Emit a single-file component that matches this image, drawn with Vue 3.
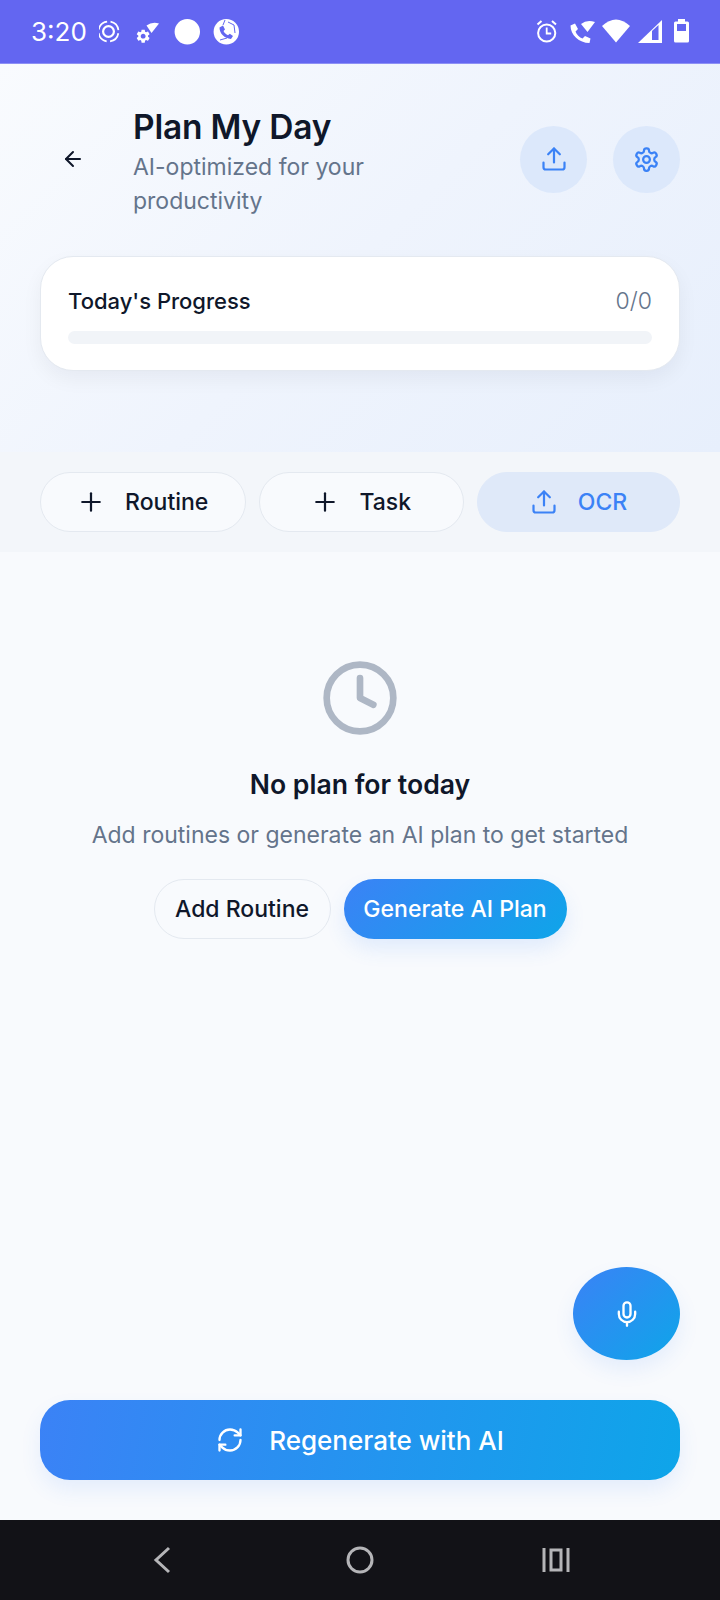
<script setup>
const chips = [
  { label: 'Routine', icon: 'plus', wide: true },
  { label: 'Task', icon: 'plus', wide: true },
  { label: 'OCR', icon: 'upload', accent: true },
]
</script>

<template>
  <div class="page">
    <div class="status">
      <div class="status-left">
        <span class="time">3:20</span>
        <svg class="s-left" width="140" height="30" viewBox="100 17 140 30" fill="none">
          <circle cx="109.5" cy="31.5" r="10" stroke="#fff" stroke-width="1.7" stroke-dasharray="12.2 3.5" stroke-dashoffset="-1.8" />
          <circle cx="109.5" cy="31.5" r="5.4" stroke="#fff" stroke-width="2.2" />
          <path d="M147.5 25.5 Q153 21.5 160 23.5 L152.5 33 Z" fill="#fff" />
          <path transform="translate(136 28) scale(0.68)" fill="#fff" d="M19.14 12.94c.04-.3.06-.61.06-.94 0-.32-.02-.64-.07-.94l2.03-1.58c.18-.14.23-.41.12-.61l-1.92-3.32c-.12-.22-.37-.29-.59-.22l-2.39.96c-.5-.38-1.03-.7-1.62-.94l-.36-2.54c-.04-.24-.24-.41-.48-.41h-3.84c-.24 0-.43.17-.47.41l-.36 2.54c-.59.24-1.13.57-1.62.94l-2.39-.96c-.22-.08-.47 0-.59.22L2.74 8.87c-.12.21-.08.47.12.61l2.03 1.58c-.05.3-.09.63-.09.94s.02.64.07.94l-2.03 1.58c-.18.14-.23.41-.12.61l1.92 3.32c.12.22.37.29.59.22l2.39-.96c.5.38 1.03.7 1.62.94l.36 2.54c.05.24.24.41.48.41h3.84c.24 0 .44-.17.47-.41l.36-2.54c.59-.24 1.13-.56 1.62-.94l2.39.96c.22.08.47 0 .59-.22l1.92-3.32c.12-.22.07-.47-.12-.61l-2.01-1.58zM12 15.6c-1.98 0-3.6-1.62-3.6-3.6s1.62-3.6 3.6-3.6 3.6 1.62 3.6 3.6-1.62 3.6-3.6 3.6z" />
          <circle cx="188.3" cy="31.7" r="12.7" fill="#fff" />
          <circle cx="227.3" cy="31.7" r="12.7" fill="#fff" />
          <path d="M220.5 27.5 L224 25.5 L226 29.5 L224.5 31 C225.5 33 227 34.5 229 35.2 L230.8 33.8 L234 36 L232 39 C225.5 38.5 220.5 33.5 220.5 27.5 Z" fill="#6366f1" />
          <path d="M226 20 L224 25 M229 22 L235 25 L236 33 M221 40 L228 38" stroke="#6366f1" stroke-width="1" />
        </svg>
      </div>
      <svg class="s-right" width="180" height="30" viewBox="520 17 180 30" fill="none">
        <circle cx="546.7" cy="33" r="8.6" stroke="#fff" stroke-width="2" />
        <path d="M546.7 27.5v6h4.5" stroke="#fff" stroke-width="1.8" />
        <path d="M537.5 24.5l4-3.5M556 24.5l-4-3.5" stroke="#fff" stroke-width="2" />
        <path d="M570.5 25.5 L575 23.5 L578 29 L575.5 31.5 C576.5 34.5 579.5 37.5 582.5 38.5 L585 36 L590.5 38.5 L589.5 43 C579 43 570.5 35 570.5 25.5 Z" fill="#fff" />
        <path d="M581 24 Q587 19 595 22 L587.5 32 Z" fill="#fff" />
        <path d="M602 26 Q616 13 630 26 L616 42.5 Z" fill="#fff" />
        <path d="M662 20 V43 H638 Z" fill="#fff" />
        <path d="M652 31 L658.5 25 V40 H652 Z" fill="#6366f1" />
        <path d="M678 19h7v2.5h2.5a1.5 1.5 0 0 1 1.5 1.5v18a1.5 1.5 0 0 1-1.5 1.5h-12a1.5 1.5 0 0 1-1.5-1.5v-18a1.5 1.5 0 0 1 1.5-1.5h2.5z" fill="#fff" />
        <rect x="677" y="24" width="9" height="7" fill="#6366f1" />
      </svg>
    </div>

    <header class="hero">
      <div class="hero-row">
        <button class="back">
          <svg width="24" height="24" viewBox="0 0 24 24" fill="none" stroke="#0f172a" stroke-width="2" stroke-linecap="round" stroke-linejoin="round">
            <path d="M12 19l-7-7 7-7" /><path d="M19 12H5" />
          </svg>
        </button>
        <div class="hero-text">
          <h1>Plan My Day</h1>
          <p>AI-optimized for your productivity</p>
        </div>
        <button class="round">
          <svg width="28" height="28" viewBox="0 0 24 24" fill="none" stroke="#3b82f6" stroke-width="1.9" stroke-linecap="round" stroke-linejoin="round">
            <path d="M21 15v4a2 2 0 0 1-2 2H5a2 2 0 0 1-2-2v-4" /><polyline points="17 8 12 3 7 8" /><line x1="12" y1="3" x2="12" y2="15" />
          </svg>
        </button>
        <button class="round">
          <svg width="27" height="27" viewBox="0 0 24 24" fill="none" stroke="#3b82f6" stroke-width="2" stroke-linecap="round" stroke-linejoin="round">
            <path d="M12.22 2h-.44a2 2 0 0 0-2 2v.18a2 2 0 0 1-1 1.73l-.43.25a2 2 0 0 1-2 0l-.15-.08a2 2 0 0 0-2.73.73l-.22.38a2 2 0 0 0 .73 2.73l.15.1a2 2 0 0 1 1 1.72v.51a2 2 0 0 1-1 1.74l-.15.09a2 2 0 0 0-.73 2.73l.22.38a2 2 0 0 0 2.73.73l.15-.08a2 2 0 0 1 2 0l.43.25a2 2 0 0 1 1 1.73V20a2 2 0 0 0 2 2h.44a2 2 0 0 0 2-2v-.18a2 2 0 0 1 1-1.73l.43-.25a2 2 0 0 1 2 0l.15.08a2 2 0 0 0 2.73-.73l.22-.39a2 2 0 0 0-.73-2.73l-.15-.08a2 2 0 0 1-1-1.74v-.5a2 2 0 0 1 1-1.74l.15-.09a2 2 0 0 0 .73-2.73l-.22-.38a2 2 0 0 0-2.73-.73l-.15.08a2 2 0 0 1-2 0l-.43-.25a2 2 0 0 1-1-1.73V4a2 2 0 0 0-2-2z" />
            <circle cx="12" cy="12" r="3" />
          </svg>
        </button>
      </div>
      <section class="progress-card">
        <div class="progress-top">
          <span class="progress-label">Today's Progress</span>
          <span class="progress-count">0/0</span>
        </div>
        <div class="track"></div>
      </section>
    </header>

    <div class="chips">
      <button v-for="chip in chips" :key="chip.label" class="chip" :class="{ accent: chip.accent, wide: chip.wide }">
        <svg v-if="chip.icon === 'plus'" width="28" height="28" viewBox="0 0 24 24" fill="none" stroke="#0f172a" stroke-width="1.9" stroke-linecap="round">
          <path d="M4.5 12h15" /><path d="M12 4.5v15" />
        </svg>
        <svg v-else width="28" height="28" viewBox="0 0 24 24" fill="none" stroke="#3b82f6" stroke-width="1.9" stroke-linecap="round" stroke-linejoin="round">
          <path d="M21 15v4a2 2 0 0 1-2 2H5a2 2 0 0 1-2-2v-4" /><polyline points="17 8 12 3 7 8" /><line x1="12" y1="3" x2="12" y2="15" />
        </svg>
        <span>{{ chip.label }}</span>
      </button>
    </div>

    <main class="content">
      <div class="empty">
        <svg width="80" height="80" viewBox="0 0 24 24" fill="none" stroke="#aeb7c5" stroke-width="2" stroke-linecap="round" stroke-linejoin="round">
          <circle cx="12" cy="12" r="10" /><polyline points="12 6 12 12 16 14" />
        </svg>
        <h2>No plan for today</h2>
        <p>Add routines or generate an AI plan to get started</p>
        <div class="empty-actions">
          <button class="outline">Add Routine</button>
          <button class="primary">Generate AI Plan</button>
        </div>
      </div>

      <button class="fab">
        <svg width="28" height="28" viewBox="0 0 24 24" fill="none" stroke="#fff" stroke-width="2" stroke-linecap="round" stroke-linejoin="round">
          <path d="M12 2a3 3 0 0 0-3 3v7a3 3 0 0 0 6 0V5a3 3 0 0 0-3-3Z" /><path d="M19 10v2a7 7 0 0 1-14 0v-2" /><line x1="12" y1="19" x2="12" y2="22" />
        </svg>
      </button>

      <button class="regen">
        <svg width="28" height="28" viewBox="0 0 24 24" fill="none" stroke="#fff" stroke-width="2" stroke-linecap="round" stroke-linejoin="round">
          <path d="M3 12a9 9 0 0 1 9-9 9.75 9.75 0 0 1 6.74 2.74L21 8" /><path d="M21 3v5h-5" /><path d="M21 12a9 9 0 0 1-9 9 9.75 9.75 0 0 1-6.74-2.74L3 16" /><path d="M8 16H3v5" />
        </svg>
        <span>Regenerate with AI</span>
      </button>
    </main>

    <nav class="nav">
      <svg width="20" height="28" viewBox="0 0 20 28" fill="none" stroke="#b5b5b8" stroke-width="3">
        <path d="M17 2 L4 14 L17 26" />
      </svg>
      <svg class="home" width="28" height="28" viewBox="0 0 28 28" fill="none" stroke="#b5b5b8" stroke-width="3">
        <circle cx="14" cy="14" r="12" />
      </svg>
      <svg width="28" height="26" viewBox="0 0 28 26" fill="none" stroke="#b5b5b8" stroke-width="3">
        <path d="M2 1v24M26 1v24" /><rect x="9" y="3" width="10" height="20" />
      </svg>
    </nav>
  </div>
</template>

<style>
html, body { margin: 0; background: #f8fafd; }
</style>

<style scoped>
.page {
  width: 720px;
  height: 1600px;
  display: flex;
  flex-direction: column;
  background: #f8fafd;
  font-family: "Inter", "Noto Sans", sans-serif;
  color: #0f172a;
  overflow: hidden;
}
button { font-family: inherit; border: none; padding: 0; cursor: pointer; }

.status {
  height: 64px;
  flex: none;
  box-sizing: border-box;
  padding: 0 20px 0 32px;
  background: #6366f1;
  border-bottom: 1px solid #8d90f5;
  display: flex;
  align-items: center;
  justify-content: space-between;
}
.status-left { display: flex; align-items: center; gap: 15px; }
.time { color: #fff; font-size: 26px; width: 53px; margin-left: -1px; font-weight: 400; }
.s-left, .s-right { display: block; }

.hero {
  height: 388px;
  flex: none;
  box-sizing: border-box;
  padding: 41px 40px 0;
  background: linear-gradient(135deg, #f9fbfe 0%, #eff4fd 50%, #e7effc 100%);
}
.hero-row { display: flex; align-items: center; height: 108px; }
.back {
  width: 66px; height: 66px; flex: none;
  background: transparent;
  display: flex; align-items: center; justify-content: center;
}
.hero-text { width: 248px; margin-left: 27px; margin-right: auto; align-self: flex-start; padding-top: 1px; }
h1 { margin: 0; font-size: 33.5px; line-height: 42px; font-weight: 600; letter-spacing: -0.2px; }
.hero-text p { margin: 2px 0 0; font-size: 23px; line-height: 34px; color: #64748b; }
.round {
  width: 67px; height: 67px; flex: none;
  margin-left: 26px;
  border-radius: 50%;
  background: #dce8fb;
  display: flex; align-items: center; justify-content: center;
}
.progress-card {
  margin-top: 43px;
  height: 115px;
  box-sizing: border-box;
  padding: 28px 27px 26px;
  background: #fff;
  border: 1px solid #e4e9f0;
  border-radius: 33px;
  box-shadow: 0 8px 20px rgba(15, 23, 42, 0.05);
}
.progress-top { display: flex; justify-content: space-between; align-items: center; height: 32px; }
.progress-label { font-size: 22px; font-weight: 500; }
.progress-count { font-size: 23px; color: #64748b; font-weight: 300; }
.track { margin-top: 14px; height: 13px; border-radius: 7px; background: #f1f4f8; }

.chips {
  height: 100px;
  flex: none;
  box-sizing: border-box;
  padding: 20px 40px;
  display: flex;
  gap: 13px;
  background: #f3f6fa;
}
.chip {
  flex: 0 0 203px;
  height: 60px;
  box-sizing: border-box;
  border: 1px solid #e4e9f0;
  border-radius: 30px;
  background: #f8fafd;
  display: flex; align-items: center; justify-content: center;
  gap: 20px;
  font-size: 23px;
  font-weight: 500;
  color: #0f172a;
}
.chip.wide { flex-basis: 205.5px; }
.chip.accent { background: #dfe9f9; border-color: #dfe9f9; color: #3b82f6; }

.content { flex: 1; position: relative; display: flex; flex-direction: column; align-items: center; padding: 106px 40px 40px; box-sizing: border-box; }
.empty { display: flex; flex-direction: column; align-items: center; }
h2 { margin: 28px 0 0; font-size: 26.6px; line-height: 36px; font-weight: 600; }
.empty p { margin: 17px 0 0; font-size: 23px; line-height: 32px; color: #64748b; white-space: nowrap; }
.empty-actions { display: flex; gap: 13px; margin-top: 28px; }
.outline {
  width: 177px; height: 60px;
  box-sizing: border-box;
  border: 1px solid #e4e9f0;
  border-radius: 30px;
  background: #f8fafd;
  color: #0f172a;
  font-size: 23px; font-weight: 500;
}
.primary {
  width: 223px; height: 60px;
  border-radius: 30px;
  background: linear-gradient(135deg, #3b82f6, #0ea5e9);
  color: #fff;
  font-size: 23px; font-weight: 500;
  box-shadow: 0 10px 20px rgba(59, 130, 246, 0.12);
}
.fab {
  position: absolute;
  right: 40px;
  bottom: 160px;
  width: 107px; height: 93px;
  border-radius: 50%;
  background: linear-gradient(135deg, #3b82f6, #0ea5e9);
  box-shadow: 0 10px 20px rgba(59, 130, 246, 0.1);
  display: flex; align-items: center; justify-content: center;
}
.regen {
  margin-top: auto;
  width: 640px; height: 80px;
  flex: none;
  border-radius: 30px;
  background: linear-gradient(100deg, #3b82f6, #0ea5e9);
  color: #fff;
  display: flex; align-items: center; justify-content: center;
  gap: 25px;
  font-size: 26px; font-weight: 500;
  box-shadow: 0 10px 20px rgba(59, 130, 246, 0.1);
}

.nav {
  height: 80px;
  flex: none;
  box-sizing: border-box;
  padding-left: 152px;
  background: #121217;
  display: flex; align-items: center;
}
.nav .home { margin: 0 168px 0 174px; }
</style>
